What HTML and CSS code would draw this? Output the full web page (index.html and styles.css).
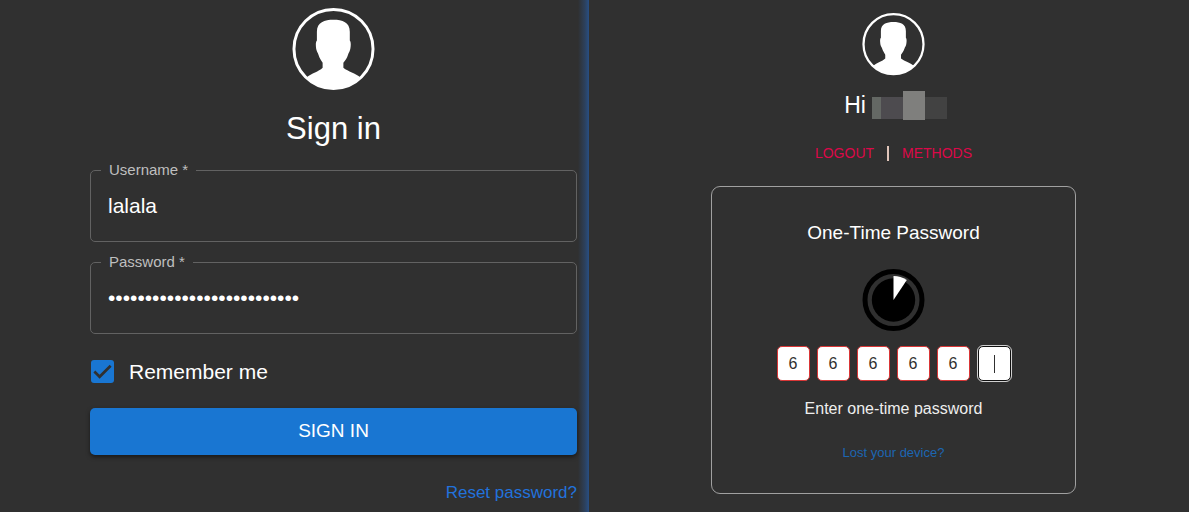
FILE: index.html
```html
<!DOCTYPE html>
<html lang="en">
<head>
<meta charset="utf-8">
<meta name="viewport" content="width=device-width, initial-scale=1">
<title>Sign in</title>
<link rel="stylesheet" href="styles.css">
</head>
<body>
<svg class="sprite" aria-hidden="true">
  <symbol id="avatar" viewBox="0 0 84 84">
    <circle cx="42" cy="41.500" r="40" fill="none" stroke="currentColor" stroke-width="3"/>
    <path fill="currentColor" d="M42 12C51 12 58.500 14.500 58.500 24V33C59.800 34.500 59.600 38 59 41.500C58.500 44 57.500 45 56.800 47C55.500 51 54 53 52 55.500V60.500C57 64.500 64 66 69.500 70.500A40 40 0 0 1 14.500 70.500C20 66 27 64.500 31 60.500V55.500C29.500 53 28 51 26.700 47C26 45 25 44 24.500 41.500C24 38 23.800 34.500 25.200 33V24C25.200 14.500 33 12 42 12Z"/>
  </symbol>
</svg>
<main class="screens">
  <section class="signin">
    <svg class="avatar avatar-large" aria-hidden="true"><use href="#avatar"/></svg>
    <h1 class="title">Sign in</h1>
    <form class="form">
      <fieldset class="field">
        <legend class="legend"><label for="username">Username *</label></legend>
        <input class="field-input" id="username" type="text" value="lalala">
      </fieldset>
      <fieldset class="field">
        <legend class="legend"><label for="password">Password *</label></legend>
        <input class="field-input" id="password" type="password" value="abcdefghijklmnopqrstuvwxyz">
      </fieldset>
      <div class="remember">
        <span class="check">
          <input class="check-input" id="remember" type="checkbox" checked>
          <svg class="check-mark" viewBox="0 0 24 24" aria-hidden="true"><path d="M3.500 12L9 17.500L20.500 6" fill="none" stroke="#303030" stroke-width="2.800"/></svg>
        </span>
        <label for="remember">Remember me</label>
      </div>
      <button class="submit" type="button">SIGN IN</button>
      <a class="reset" href="#reset">Reset password?</a>
    </form>
  </section>
  <section class="verify">
    <svg class="avatar avatar-small" aria-hidden="true"><use href="#avatar"/></svg>
    <h2 class="greeting">Hi
      <svg class="masked-name" viewBox="0 0 75 30" aria-hidden="true">
        <path fill="#646864" d="M0 6h9v22H0z"/><path fill="#4d4b4f" d="M9 6h22v22H9z"/>
        <path fill="#7f7f7d" d="M31 0h22v29H31z"/><path fill="#424242" d="M53 6h22v22H53z"/>
      </svg>
    </h2>
    <nav class="links">
      <a class="link" href="#logout">LOGOUT</a>
      <span class="separator"></span>
      <a class="link" href="#methods">METHODS</a>
    </nav>
    <form class="card">
      <h3 class="card-title">One-Time Password</h3>
      <svg class="timer" viewBox="0 0 63 63" aria-hidden="true">
        <circle cx="31.500" cy="31" r="28.500" fill="none" stroke="#000" stroke-width="5"/>
        <circle cx="31.500" cy="31" r="21.700" fill="#000"/>
        <path d="M31.500 31V7A24 24 0 0 1 44.800 11Z" fill="#fff"/>
      </svg>
      <div class="code">
        <input class="digit" aria-label="Digit 1" value="6">
        <input class="digit" aria-label="Digit 2" value="6">
        <input class="digit" aria-label="Digit 3" value="6">
        <input class="digit" aria-label="Digit 4" value="6">
        <input class="digit" aria-label="Digit 5" value="6">
        <span class="digit-slot"><input class="digit digit-active" aria-label="Digit 6"><span class="caret"></span></span>
      </div>
      <p class="hint">Enter one-time password</p>
      <a class="lost" href="#lost">Lost your device?</a>
    </form>
  </section>
</main>
</body>
</html>
```
FILE: styles.css
```css
* {
  box-sizing: border-box;
}

body {
  margin: 0;
  background: #303030;
  color: #fff;
  font-family: "Liberation Sans", Arial, sans-serif;
}

h1, h2, h3, p {
  margin: 0;
  font-weight: 400;
}

a {
  text-decoration: none;
}

.sprite {
  position: absolute;
  width: 0;
  height: 0;
}

.screens {
  display: grid;
  grid-template-columns: 589fr 600fr;
  min-height: 100vh;
}

.signin {
  display: flex;
  flex-direction: column;
  align-items: center;
  padding: 8px 12px 9px 90px;
  background: linear-gradient(to left, #284f84, #2c415e 4px, #303030 11px);
}

.avatar-large {
  width: 83px;
  height: 83px;
}

.avatar-small {
  width: 63px;
  height: 63px;
}

.title {
  margin: 20px 0 14px;
  font-size: 31px;
  line-height: 36px;
}

.form {
  display: flex;
  flex-direction: column;
  width: 100%;
}

.field {
  min-width: 0;
  margin: 0 0 11px;
  padding: 0 10px 8px;
  border: 1px solid #626262;
  border-radius: 5px;
}

.legend {
  padding: 0 8px;
  color: #bfbfbf;
  font-size: 15px;
  line-height: 18px;
}

.field-input {
  display: block;
  width: 100%;
  height: 54px;
  padding: 0 7px;
  border: 0;
  outline: 0;
  background: transparent;
  color: #fff;
  font: inherit;
  font-size: 21px;
}

.remember {
  display: flex;
  align-items: center;
  gap: 15px;
  margin: 15px 0 25px 1px;
  font-size: 21px;
  line-height: 23px;
}

.check {
  display: grid;
}

.check-input,
.check-mark {
  grid-area: 1 / 1;
  width: 23px;
  height: 23px;
  margin: 0;
}

.check-input {
  appearance: none;
  border-radius: 3px;
  background: #1976d2;
}

.check-mark {
  pointer-events: none;
}

.submit {
  height: 47px;
  padding: 0 0 1px;
  border: 0;
  border-radius: 5px;
  background: #1976d2;
  box-shadow: 0 2px 4px rgba(0, 0, 0, 0.5);
  color: #fff;
  font: inherit;
  font-size: 19px;
}

.reset {
  align-self: flex-end;
  margin-top: 28px;
  color: #2272dc;
  font-size: 17px;
  line-height: 20px;
}

.verify {
  display: flex;
  flex-direction: column;
  align-items: center;
  padding: 13px 113px 17px 122px;
}

.greeting {
  display: flex;
  gap: 6px;
  margin-top: 15px;
  padding-left: 4px;
  font-size: 23px;
  line-height: 29px;
}

.masked-name {
  width: 75px;
  height: 30px;
}

.links {
  display: flex;
  align-items: center;
  gap: 13px;
  margin: 24px 0 25px;
  font-size: 14px;
  line-height: 16px;
}

.link {
  color: #dc0849;
}

.separator {
  width: 2px;
  height: 15px;
  background: #e0c5ba;
}

.card {
  display: flex;
  flex-direction: column;
  align-items: center;
  width: 100%;
  padding: 34px 16px 32px;
  border: 1px solid #a0a0a0;
  border-radius: 9px;
}

.card-title {
  font-size: 19px;
  line-height: 24px;
}

.timer {
  width: 63px;
  height: 63px;
  margin: 24px 0 14px;
}

.code {
  display: flex;
  gap: 7px;
}

.digit {
  display: block;
  width: 33px;
  height: 35px;
  padding: 0;
  border: 1px solid #d93636;
  border-radius: 5px;
  background: #fff;
  color: #303030;
  font: inherit;
  font-size: 16px;
  text-align: center;
}

.digit-slot {
  position: relative;
  margin-left: 1px;
}

.digit-active {
  border-color: #101010;
  outline: 1px solid #d0d0d0;
  outline-offset: 0;
}

.caret {
  position: absolute;
  top: 9px;
  left: 16px;
  width: 1px;
  height: 18px;
  background: #303030;
}

.hint {
  margin-top: 18px;
  color: #eee;
  font-size: 16px;
  line-height: 20px;
}

.lost {
  margin-top: 26px;
  color: #1c66b2;
  font-size: 13px;
  line-height: 16px;
}
```
